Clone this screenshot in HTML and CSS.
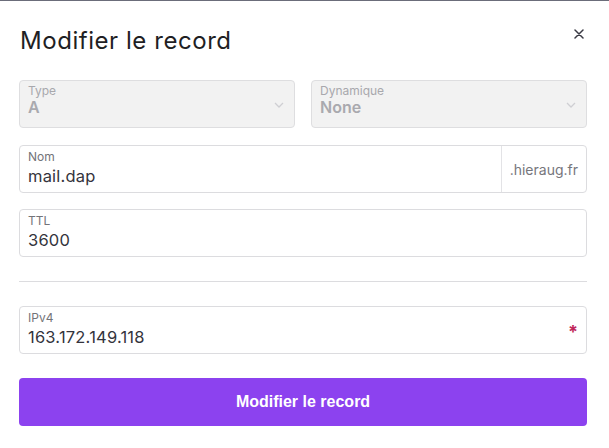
FILE: index.html
```html
<!DOCTYPE html>
<html lang="fr">
<head>
<meta charset="utf-8">
<link rel="stylesheet" href="styles.css">
</head>
<body>
<div class="modal">
  <div class="header">
    <h1 class="title">Modifier le record</h1>
    <button class="close" aria-label="Fermer">
      <svg width="10" height="10" viewBox="0 0 10 10"><path d="M1 1L9 9M9 1L1 9" stroke="#3a3a44" stroke-width="1.5" stroke-linecap="round"/></svg>
    </button>
  </div>
  <div class="form">
    <div class="row two">
      <div class="field disabled">
        <div class="inner">
          <span class="label">Type</span>
          <span class="value strong">A</span>
        </div>
        <svg class="chev" width="10" height="7" viewBox="0 0 10 7"><path d="M1 1L5 5L9 1" fill="none" stroke="#cfcfd3" stroke-width="1.3"/></svg>
      </div>
      <div class="field disabled">
        <div class="inner">
          <span class="label">Dynamique</span>
          <span class="value strong">None</span>
        </div>
        <svg class="chev" width="10" height="7" viewBox="0 0 10 7"><path d="M1 1L5 5L9 1" fill="none" stroke="#cfcfd3" stroke-width="1.3"/></svg>
      </div>
    </div>
    <div class="field nom">
      <div class="inner">
        <span class="label">Nom</span>
        <span class="value">mail.dap</span>
      </div>
      <div class="suffix">.hieraug.fr</div>
    </div>
    <div class="field">
      <div class="inner">
        <span class="label">TTL</span>
        <span class="value">3600</span>
      </div>
    </div>
    <hr class="sep">
    <div class="field">
      <div class="inner">
        <span class="label">IPv4</span>
        <span class="value">163.172.149.118</span>
      </div>
      <span class="req">*</span>
    </div>
    <button class="submit">Modifier le record</button>
  </div>
</div>
</body>
</html>
```
FILE: styles.css
```css
html, body {
  margin: 0;
  padding: 0;
  background: #ffffff;
}
body {
  border-top: 1px solid #6b6d7a;
  font-family: Inter, "Noto Sans", sans-serif;
  color: #2b2b33;
}
.modal {
  padding: 0 22px 0 19px;
}
.header {
  display: flex;
  justify-content: space-between;
  align-items: flex-start;
  height: 79px;
}
.title {
  margin: 25px 0 0 1px;
  font-size: 24px;
  font-weight: 400;
  line-height: 30px;
  color: #1f1f24;
  letter-spacing: 0.55px;
}
.close {
  margin: 27px 2px 0 0;
  padding: 0;
  border: 0;
  background: transparent;
  width: 12px;
  height: 12px;
  display: flex;
  align-items: center;
  justify-content: center;
}
.form {
  display: flex;
  flex-direction: column;
  gap: 16px;
}
.row.two {
  display: grid;
  grid-template-columns: 1fr 1fr;
  gap: 16px;
}
.field {
  display: flex;
  align-items: stretch;
  border: 1px solid #dcdcdf;
  border-radius: 4px;
  background: #fff;
  height: 48px;
  box-sizing: border-box;
}
.field.nom {
  margin-top: 1px;
}
.field.disabled {
  background: #f2f2f2;
  border-color: #dedee0;
}
.inner {
  flex: 1;
  display: flex;
  flex-direction: column;
  padding: 4px 9px 3px 8px;
  min-width: 0;
}
.disabled .inner {
  padding-top: 3px;
}
.label {
  font-size: 12px;
  line-height: 14px;
  color: #737378;
}
.value {
  font-size: 16.5px;
  line-height: 24px;
  color: #34343c;
  letter-spacing: 0.2px;
}
.disabled .label {
  color: #a8a8ad;
  line-height: 13px;
}
.value.strong {
  font-size: 16px;
  font-weight: 600;
  color: #a9a9ae;
  line-height: 20px;
  letter-spacing: 0;
}
.chev {
  align-self: center;
  margin: 2px 10px 0 0;
}
.suffix {
  display: flex;
  align-items: center;
  padding: 0 8px 0 8px;
  border-left: 1px solid #e3e3e6;
  font-size: 14px;
  color: #76767c;
}
.sep {
  margin: 8px 0 8px;
  border: 0;
  border-top: 1px solid #dcdcdf;
  height: 0;
}
.req {
  align-self: center;
  margin: 4px 8px 0 0;
  color: #c0265a;
  font-size: 18px;
  font-weight: 700;
  line-height: 1;
}
.submit {
  margin-top: 8px;
  height: 48px;
  border: 0;
  border-radius: 4px;
  background: #8c42ef;
  color: #ffffff;
  font-family: "Liberation Sans", Arial, sans-serif;
  font-weight: 700;
  font-size: 16px;
}
```
